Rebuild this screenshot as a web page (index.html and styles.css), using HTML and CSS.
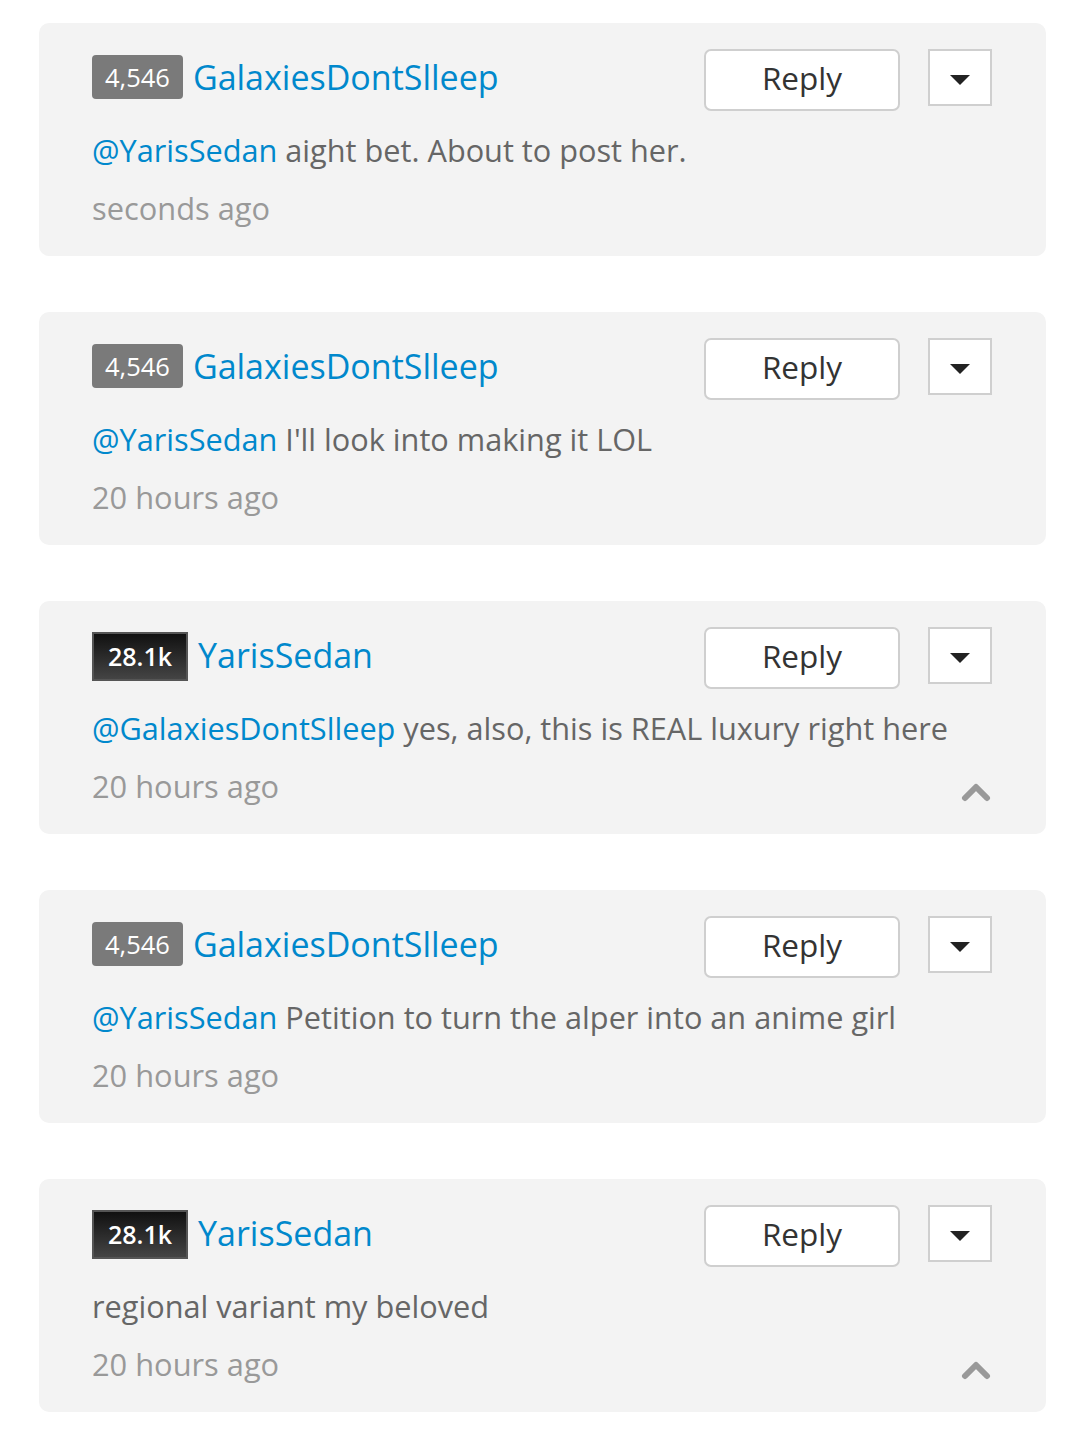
FILE: index.html
```html
<!DOCTYPE html>
<html>
<head>
<meta charset="utf-8">
<link rel="stylesheet" href="styles.css">
</head>
<body>
<div class="list">
  <div class="card">
    <div class="head">
      <div class="who"><span class="badge grey">4,546</span><a class="name">GalaxiesDontSlleep</a></div>
      <div class="actions"><button class="reply">Reply</button><button class="drop"><span class="caret"></span></button></div>
    </div>
    <p class="text"><a class="mention">@YarisSedan</a> aight bet. About to post her.</p>
    <div class="foot"><span class="time">seconds ago</span></div>
  </div>
  <div class="card">
    <div class="head">
      <div class="who"><span class="badge grey">4,546</span><a class="name">GalaxiesDontSlleep</a></div>
      <div class="actions"><button class="reply">Reply</button><button class="drop"><span class="caret"></span></button></div>
    </div>
    <p class="text"><a class="mention">@YarisSedan</a> I'll look into making it LOL</p>
    <div class="foot"><span class="time">20 hours ago</span></div>
  </div>
  <div class="card">
    <div class="head">
      <div class="who"><span class="badge dark">28.1k</span><a class="name">YarisSedan</a></div>
      <div class="actions"><button class="reply">Reply</button><button class="drop"><span class="caret"></span></button></div>
    </div>
    <p class="text"><a class="mention">@GalaxiesDontSlleep</a> yes, also, this is REAL luxury right here</p>
    <div class="foot"><span class="time">20 hours ago</span><svg class="up" width="32" height="20" viewBox="0 0 32 20"><polyline points="5,16 16,5 27,16" fill="none" stroke="#999" stroke-width="6" stroke-linecap="round" stroke-linejoin="round"/></svg></div>
  </div>
  <div class="card">
    <div class="head">
      <div class="who"><span class="badge grey">4,546</span><a class="name">GalaxiesDontSlleep</a></div>
      <div class="actions"><button class="reply">Reply</button><button class="drop"><span class="caret"></span></button></div>
    </div>
    <p class="text"><a class="mention">@YarisSedan</a> Petition to turn the alper into an anime girl</p>
    <div class="foot"><span class="time">20 hours ago</span></div>
  </div>
  <div class="card">
    <div class="head">
      <div class="who"><span class="badge dark">28.1k</span><a class="name">YarisSedan</a></div>
      <div class="actions"><button class="reply">Reply</button><button class="drop"><span class="caret"></span></button></div>
    </div>
    <p class="text">regional variant my beloved</p>
    <div class="foot"><span class="time">20 hours ago</span><svg class="up" width="32" height="20" viewBox="0 0 32 20"><polyline points="5,16 16,5 27,16" fill="none" stroke="#999" stroke-width="6" stroke-linecap="round" stroke-linejoin="round"/></svg></div>
  </div>
</div>
</body>
</html>
```
FILE: styles.css
```css
html, body {
  margin: 0;
  padding: 0;
  background: #fff;
  font-family: "Open Sans", "Noto Sans", sans-serif;
}
.list {
  padding: 23px 38px 0 39px;
  display: flex;
  flex-direction: column;
  gap: 56px;
}
.card {
  background: #f3f3f3;
  border-radius: 10px;
  padding: 26px 54px 23px 53px;
}
.head {
  display: flex;
  justify-content: space-between;
  align-items: center;
  height: 62px;
}
.who {
  display: flex;
  align-items: center;
  gap: 10px;
  margin-top: -6px;
}
.badge {
  display: inline-flex;
  align-items: center;
  justify-content: center;
  height: 44px;
  padding: 0 13px;
  color: #fff;
  font-size: 25.5px;
  box-sizing: border-box;
}
.badge.grey {
  background: #7a7a7a;
  border-radius: 4px;
}
.badge.dark {
  height: 49px;
  padding: 0 14px;
  background: linear-gradient(#111, #444);
  border: 2px solid #555;
  font-weight: 600;
  font-size: 25px;
  margin-top: 2px;
}
.name {
  color: #0088cc;
  font-size: 34px;
  text-decoration: none;
}
.actions {
  display: flex;
  align-items: center;
  gap: 28px;
}
.reply {
  width: 196px;
  height: 62px;
  background: #fff;
  border: 2px solid #cfcfcf;
  border-radius: 7px;
  font-family: inherit;
  font-size: 31.5px;
  line-height: 1;
  color: #333;
  padding: 0 0 4px;
}
.drop {
  width: 64px;
  height: 57px;
  background: #fff;
  border: 2px solid #cfcfcf;
  border-radius: 0;
  padding: 0;
  display: flex;
  align-items: center;
  justify-content: center;
  margin-top: -5px;
}
.caret {
  width: 0;
  height: 0;
  border-left: 10px solid transparent;
  border-right: 10px solid transparent;
  border-top: 10px solid #222;
  margin-top: 4px;
}
.text {
  margin: 15px 0 0;
  font-size: 30.7px;
  line-height: 48px;
  color: #666;
}
.mention {
  color: #0088cc;
  text-decoration: none;
}
.foot {
  margin-top: 11px;
  display: flex;
  justify-content: space-between;
  align-items: center;
  height: 48px;
}
.time {
  font-size: 30.8px;
  color: #999;
  margin-top: -3px;
}
.up {
  display: block;
  margin-top: 10px;
}
```
